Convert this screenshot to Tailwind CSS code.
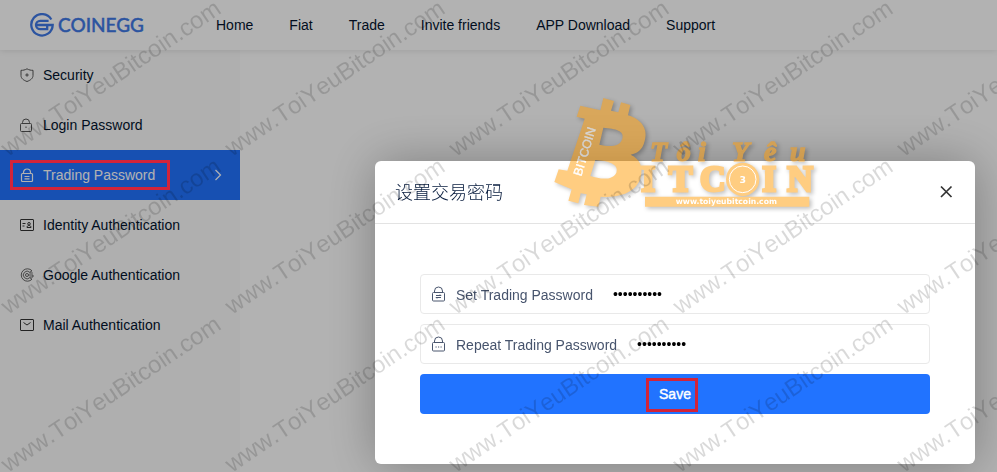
<!DOCTYPE html>
<html lang="en">
<head>
  <meta charset="UTF-8">
  <meta name="viewport" content="width=device-width, initial-scale=1.0">
  <title>COINEGG - Trading Password</title>
  <script src="https://cdn.jsdelivr.net/npm/@tailwindcss/browser@4"></script>
</head>
<body class="relative min-h-screen overflow-hidden bg-white font-['Liberation_Sans',Arial,sans-serif] text-sm text-[#03142e]">

  <header class="relative flex h-[50px] items-center pl-[30px] shadow-[0_1px_6px_rgba(0,0,0,0.1)]">
    <a href="#" class="flex w-[186px] items-center gap-1 text-[#4079e6]">
      <svg class="size-6" viewBox="0 0 24 24" fill="none" stroke="currentColor" stroke-width="2.3">
        <path d="M21.300 6.500A10.700 10.700 0 1 0 22.700 12H7"/>
        <path d="M18.600 7.800H10.200a4.200 4.200 0 0 0 0 8.400H17.200V12"/>
      </svg>
      <span class="font-['Lato',sans-serif] text-[19px] leading-6 font-medium [-webkit-text-stroke:0.4px_currentColor]">COINEGG</span>
    </a>
    <nav class="flex gap-9 whitespace-nowrap">
      <a href="#">Home</a>
      <a href="#">Fiat</a>
      <a href="#">Trade</a>
      <a href="#">Invite friends</a>
      <a href="#">APP Download</a>
      <a href="#">Support</a>
    </nav>
  </header>

  <aside class="min-h-[calc(100vh-50px)] w-60 bg-[#fbfbfb]">
    <nav class="flex flex-col">
      <a href="#" class="flex h-[50px] items-center gap-2 px-5">
        <svg class="size-[15px]" viewBox="0 0 15 15" fill="none" stroke="#555" stroke-width="1"><path d="M7 .8C5 2 3 2.400 1 2.300V7.500c0 3 2.700 4.800 6 6 3.300-1.200 6-3 6-6V2.300C11 2.400 9 2 7 .8z"/><path d="M7 5.300v3.400M5.300 7h3.400"/></svg>
        Security
      </a>
      <a href="#" class="flex h-[50px] items-center gap-2 px-5">
        <svg class="size-[15px]" viewBox="0 0 15 15" fill="none" stroke="#555" stroke-width="1"><rect x=".5" y="5.500" width="11" height="8" rx="1"/><path d="M2.500 5.500V4.500a3.500 3.500 0 0 1 7 0v1M6 8.500v1.500"/></svg>
        Login Password
      </a>
      <a href="#" class="relative flex h-[50px] items-center gap-2 bg-[#2173ff] px-5 text-white">
        <svg class="size-[15px]" viewBox="0 0 15 15" fill="none" stroke="currentColor" stroke-width="1.200"><rect x="1.500" y="5.500" width="11" height="8" rx="1"/><path d="M3.500 5.500V4.500a3.500 3.500 0 0 1 7 0v1M4.500 8.500h5M4.500 10.800h5"/></svg>
        Trading Password
        <svg class="-mr-0.5 ml-auto h-3 w-2" viewBox="0 0 8 12" fill="none" stroke="currentColor" stroke-width="1.200"><path d="M1.500 1l5 5-5 5"/></svg>
        <span class="absolute top-2.5 left-2.5 z-30 h-[30px] w-40 border-3 border-[#d2243a]"></span>
      </a>
      <a href="#" class="flex h-[50px] items-center gap-2 px-5">
        <svg class="size-[15px]" viewBox="0 0 15 15" fill="none" stroke="#333" stroke-width="1"><rect x=".5" y="1.500" width="13" height="11" rx=".5"/><path d="M2.500 5.500h3M2.500 8h2M7 9.500c0-1.300.8-2 2-2s2 .7 2 2z"/><circle cx="9" cy="5.800" r="1.300"/></svg>
        Identity Authentication
      </a>
      <a href="#" class="flex h-[50px] items-center gap-2 px-5">
        <svg class="size-[15px]" viewBox="0 0 15 15" fill="none" stroke="#555" stroke-width=".9"><path d="M12 2.800A6.200 6.200 0 1 0 12 11.200M12 2.800L9.800 4.300A3.800 3.800 0 1 0 9.800 9.700M8.500 7H13M12.800 5H9.500M13 7v2H9.500M12 11.200L9.800 9.700"/><circle cx="7" cy="7" r="1.500"/></svg>
        Google Authentication
      </a>
      <a href="#" class="flex h-[50px] items-center gap-2 px-5">
        <svg class="size-[15px]" viewBox="0 0 15 15" fill="none" stroke="#333" stroke-width="1"><rect x=".5" y="1.500" width="13" height="11" rx=".5"/><path d="M3.500 4.500L7 7l3.500-2.500"/></svg>
        Mail Authentication
      </a>
    </nav>
  </aside>

  <!-- Modal with its dark backdrop -->
  <div class="fixed inset-0 z-20 flex items-start justify-end bg-black/30 pt-[161px] pr-[22px]">
    <section role="dialog" aria-labelledby="dialog-title" class="w-[600px] rounded-md bg-white shadow-[1px_1px_50px_rgba(0,0,0,0.3)]">
      <div class="flex h-[63px] items-center justify-between border-b border-[#e3e3e3] px-5">
        <h2 id="dialog-title" class="pb-0.5 font-['Noto_Sans_CJK_SC',sans-serif] text-lg font-light text-[#061a3c]" lang="zh">设置交易密码</h2>
        <button type="button" aria-label="Close">
          <svg class="size-4" viewBox="0 0 16 16" fill="none" stroke="#333" stroke-width="1.700"><path d="M2 2.500l10.500 10.500M12.500 2.500L2 13"/></svg>
        </button>
      </div>
      <form class="flex flex-col gap-2.5 px-[45px] py-[50px]">
        <div class="flex h-10 items-center rounded-sm border border-[#e9e9e9] px-2.5">
          <svg class="mr-[9px] size-4" viewBox="0 0 16 16" fill="none" stroke="#4a566e" stroke-width="1"><rect x="1.500" y="6.500" width="12" height="8.500" rx="1"/><path d="M3.500 6.500V5a4 4 0 0 1 8 0v1.500M5 9.500h5l-1-1M10 11.500H5l1 1"/></svg>
          <label for="password" class="pt-0.5 text-[#47546d]">Set Trading Password</label>
          <input id="password" type="password" value="1234567890" class="ml-5 min-w-0 flex-1 text-black outline-none">
        </div>
        <div class="flex h-10 items-center rounded-sm border border-[#e9e9e9] px-2.5">
          <svg class="mr-[9px] size-4" viewBox="0 0 16 16" fill="none" stroke="#4a566e" stroke-width="1"><rect x="1.500" y="6.500" width="12" height="8.500" rx="1"/><path d="M3.500 6.500V5a4 4 0 0 1 8 0v1.500M4.500 11h1.200M7 11h1.200M9.500 11h1.200"/></svg>
          <label for="repeat" class="pt-0.5 text-[#47546d]">Repeat Trading Password</label>
          <input id="repeat" type="password" value="1234567890" class="ml-5 min-w-0 flex-1 text-black outline-none">
        </div>
        <button type="submit" class="relative flex h-10 items-center justify-center rounded-sm bg-[#2173ff] text-white [-webkit-text-stroke:0.4px_white]">
          Save
          <span class="absolute top-1 left-[226px] h-[34px] w-[52px] border-3 border-[#d2243a]"></span>
        </button>
      </form>
    </section>
  </div>

  <!-- Site stamp -->
  <svg class="pointer-events-none absolute top-[90px] left-[540px] z-40 h-[130px] w-[290px] opacity-50 drop-shadow-[2px_2px_2px_rgba(0,0,0,0.5)]" viewBox="0 0 870 390" fill="#ff9b05">
    <path fill-rule="evenodd" d="M190 24L222 33 213 62 235 67 243 37 271 45 264 76C305 88 325 118 314 153 307 181 292 190 272 194 300 207 310 231 302 262 292 300 252 325 182 320L175 350 132 345 140 313 122 310 115 340 85 332 95 298 43 276 56 238 82 242 134 86 110 80 121 47 181 61zM190 113L178 164C210 172 240 170 247 146 254 122 227 116 190 113zM166 210L151 258C181 268 218 272 229 248 238 222 203 212 166 210z"/>
    <text transform="translate(124 260) rotate(-73)" font-family="Liberation Sans, sans-serif" font-size="37" fill="#fff" stroke="#fff">BITCOIN</text>
    <g font-family="Liberation Serif, serif" font-weight="bold" stroke="#ff9b05">
      <text y="214" font-size="84" font-style="italic" stroke-width="4" x="330 410 474">Tôi</text>
      <text y="214" font-size="84" font-style="italic" stroke-width="4" x="576 672 750">Yêu</text>
      <text y="302" font-size="106" stroke-width="9" x="304 386 480">ITC</text>
      <text y="302" font-size="106" stroke-width="9" x="667 742">IN</text>
    </g>
    <circle cx="608" cy="268" r="50"/>
    <circle cx="608" cy="268" r="40" fill="none" stroke="#fff" stroke-width="3"/>
    <text x="608" y="278" font-family="DejaVu Sans, sans-serif" font-weight="bold" font-size="28" fill="#fff" text-anchor="middle">3</text>
    <path d="M315 320H808V350H315z"/>
    <text x="559" y="341" font-family="DejaVu Sans, sans-serif" font-weight="bold" font-size="23" fill="#fff" text-anchor="middle">www.toiyeubitcoin.com</text>
  </svg>

  <!-- Repeated diagonal watermark -->
  <svg id="watermark" class="pointer-events-none absolute inset-0 z-40 size-full fill-black/15 [font-kerning:none]" font-family="Liberation Sans, sans-serif" font-size="24"></svg>
  <script>
    const watermark = document.getElementById("watermark");
    let marks = "";
    for (let row = 0; row < 5; row++) {
      for (let col = 0; col < 5; col++) {
        marks += `<text transform="translate(${8 + col * 224} ${157 + row * 158}) rotate(-34)">www.ToiYeuBitcoin.com</text>`;
      }
    }
    watermark.innerHTML = marks;
  </script>
</body>
</html>
